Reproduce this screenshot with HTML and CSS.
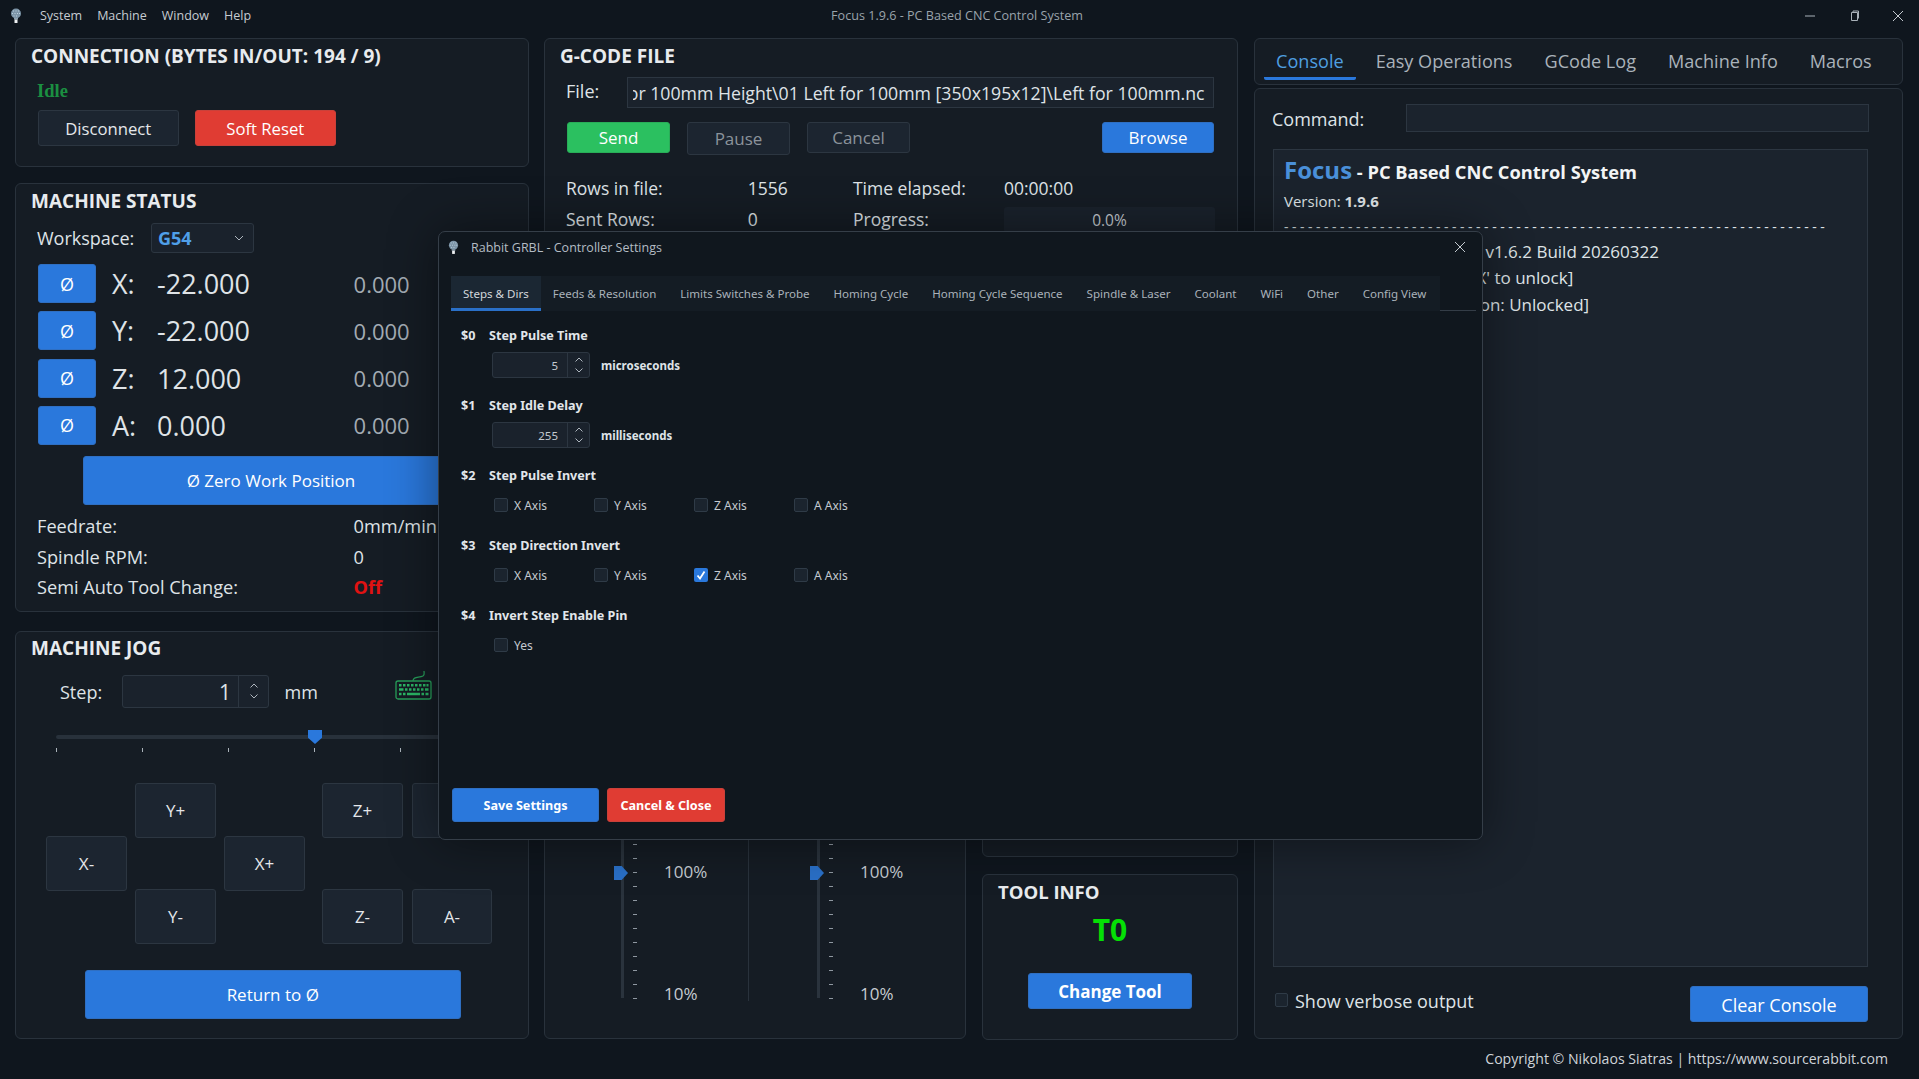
FILE: index.html
```html
<!DOCTYPE html>
<html lang="en">
<head>
<meta charset="utf-8">
<title>Focus 1.9.6 - PC Based CNC Control System</title>
<link rel="stylesheet" href="styles.css">
</head>
<body>
<svg class="defs" width="0" height="0" aria-hidden="true">
  <symbol id="bulb" viewBox="0 0 12 16">
    <circle cx="6" cy="5.500" r="5" fill="#7d95a8"/>
    <path d="M3 3h1M5.500 3h1M8 3h1M2 5.500h1M4.500 5.500h1M7 5.500h1M9 5.500h1M3.500 8h1M6 8h1" stroke="#bcd0de" stroke-width="1"/>
    <path d="M4 10h4v1.500H4z" fill="#8fa3b2"/>
    <path d="M4.500 11.500h3V15h-3z" fill="#eef1f3"/>
  </symbol>
  <symbol id="updown" viewBox="0 0 12 24">
    <path d="M2.500 8.500 6 5l3.500 3.500M2.500 15.500 6 19l3.500-3.500" fill="none" stroke="#aeb6be" stroke-width="1"/>
  </symbol>
  <symbol id="x" viewBox="0 0 12 12">
    <path d="M1 1l10 10M11 1 1 11" fill="none" stroke="#c4cad0" stroke-width="1"/>
  </symbol>
</svg>

<header class="titlebar">
  <nav class="menu">
    <svg class="bulb"><use href="#bulb"/></svg>
    <span>System</span><span>Machine</span><span>Window</span><span>Help</span>
  </nav>
  <div class="apptitle">Focus 1.9.6 - PC Based CNC Control System</div>
  <div class="winctl">
    <svg width="12" height="12" viewBox="0 0 12 12"><path d="M1 6h10" stroke="#aab2ba" fill="none"/></svg>
    <svg width="12" height="12" viewBox="0 0 12 12"><path d="M3.500 2.500h6v8h-6zM5 2.500V1h5.500v7.500" stroke="#aab2ba" fill="none"/></svg>
    <svg width="12" height="12"><use href="#x"/></svg>
  </div>
</header>

<main class="main">
  <section class="col-left">
    <div class="panel p-conn">
      <h2 class="ptitle">CONNECTION (BYTES IN/OUT: 194 / 9)</h2>
      <div class="idle">Idle</div>
      <div class="conn-btns">
        <button class="btn dark conn-btn">Disconnect</button>
        <button class="btn red conn-btn">Soft Reset</button>
      </div>
    </div>

    <div class="panel p-status">
      <h2 class="ptitle">MACHINE STATUS</h2>
      <div class="workspace">
        <span class="ws-label">Workspace:</span>
        <div class="combo"><span>G54</span>
          <svg width="10" height="6" viewBox="0 0 10 6"><path d="M1 1l4 4 4-4" fill="none" stroke="#aeb6be"/></svg>
        </div>
      </div>
      <div class="axes">
        <button class="btn blue zero">Ø</button><span class="axis">X:</span><span class="aval">-22.000</span><span class="mval">0.000</span>
        <button class="btn blue zero">Ø</button><span class="axis">Y:</span><span class="aval">-22.000</span><span class="mval">0.000</span>
        <button class="btn blue zero">Ø</button><span class="axis">Z:</span><span class="aval">12.000</span><span class="mval">0.000</span>
        <button class="btn blue zero">Ø</button><span class="axis">A:</span><span class="aval">0.000</span><span class="mval">0.000</span>
      </div>
      <button class="btn blue zero-all">Ø Zero Work Position</button>
      <div class="info">
        <span>Feedrate:</span><span>0mm/min</span>
        <span>Spindle RPM:</span><span>0</span>
        <span>Semi Auto Tool Change:</span><span class="off">Off</span>
      </div>
    </div>

    <div class="panel p-jog">
      <h2 class="ptitle jog-title">MACHINE JOG</h2>
      <div class="step-row">
        <span class="step-label">Step:</span>
        <div class="spin spin-lg"><span class="spin-val">1</span><span class="spin-btn"><svg width="12" height="24"><use href="#updown"/></svg></span></div>
        <span class="mm">mm</span>
        <svg class="kbd" width="37" height="30" viewBox="0 0 37 30">
          <rect x="1" y="11" width="35" height="18" rx="2" fill="none" stroke="#27a05a" stroke-width="1.300"/>
          <path d="M18 11c0-5 6-3 10-5 2-1 1-3 1-5" fill="none" stroke="#27a05a" stroke-width="1.200"/>
          <path d="M4 15.200h2.500M8 15.200h2.500M12 15.200h2.500M16 15.200h2.500M20 15.200h2.500M24 15.200h2.500M28 15.200h2.500M31.500 15.200h2M4 19.500h4.500M10 19.500h2.500M14 19.500h2.500M18 19.500h2.500M22 19.500h2.500M26 19.500h2.500M30 19.500h3.500M4 24h2.500M8 24h2.500M12 24h13M26.500 24h2.500M30.500 24h3" stroke="#2bb866" stroke-width="2.400" fill="none"/>
        </svg>
      </div>
      <div class="hslider">
        <div class="htrack"></div>
        <div class="hthumb"></div>
        <div class="hticks"><i></i><i></i><i></i><i></i><i></i><i></i></div>
      </div>
      <div class="pad">
        <button class="btn dark jog c2 r1">Y+</button>
        <button class="btn dark jog c5 r1">Z+</button>
        <button class="btn dark jog c6 r1">A+</button>
        <button class="btn dark jog c1 r2">X-</button>
        <button class="btn dark jog c3 r2">X+</button>
        <button class="btn dark jog c2 r3">Y-</button>
        <button class="btn dark jog c5 r3">Z-</button>
        <button class="btn dark jog c6 r3">A-</button>
      </div>
      <button class="btn blue return">Return to Ø</button>
    </div>
  </section>

  <section class="col-mid">
    <div class="panel p-gcode">
      <h2 class="ptitle">G-CODE FILE</h2>
      <div class="file-row">
        <span class="file-label">File:</span>
        <div class="file-input"><div class="file-clip"><span>Door Left for 100mm Height\01 Left for 100mm [350x195x12]\Left for 100mm.nc</span></div></div>
      </div>
      <div class="file-btns">
        <button class="btn green fb">Send</button>
        <button class="btn dark fb dim tall">Pause</button>
        <button class="btn dark fb dim">Cancel</button>
        <button class="btn blue fb browse">Browse</button>
      </div>
      <div class="stats">
        <span>Rows in file:</span><span>1556</span><span>Time elapsed:</span><span>00:00:00</span>
        <span>Sent Rows:</span><span>0</span><span>Progress:</span><div class="progress">0.0%</div>
      </div>
    </div>
    <div class="lower">
      <div class="panel p-over">
        <div class="ov-col ov-sep">
          <div class="vtrack"><div class="vthumb"></div></div>
          <div class="vticks"><i></i><i></i><i></i><i></i><i></i><i></i><i></i><i></i><i></i><i></i><i></i><i></i></div>
          <div class="vlabels"><span>100%</span><span>10%</span></div>
        </div>
        <div class="ov-col ov-col2">
          <div class="vtrack"><div class="vthumb"></div></div>
          <div class="vticks"><i></i><i></i><i></i><i></i><i></i><i></i><i></i><i></i><i></i><i></i><i></i><i></i></div>
          <div class="vlabels"><span>100%</span><span>10%</span></div>
        </div>
      </div>
      <div class="tool-col">
        <div class="panel p-hidden"></div>
        <div class="panel p-tool">
          <h2 class="ptitle tool-title">TOOL INFO</h2>
          <div class="t0">T0</div>
          <button class="btn blue change">Change Tool</button>
        </div>
      </div>
    </div>
  </section>

  <section class="col-right">
    <div class="panel p-tabs">
      <span class="tab on">Console</span><span class="tab">Easy Operations</span><span class="tab">GCode Log</span><span class="tab">Machine Info</span><span class="tab">Macros</span>
    </div>
    <div class="panel p-console">
      <div class="cmd-row"><span class="cmd-label">Command:</span><div class="cmd-input"></div></div>
      <div class="console">
        <div class="c-head"><b class="focus">Focus</b><b class="c-sub"> - PC Based CNC Control System</b></div>
        <div class="c-ver">Version: <b>1.9.6</b></div>
        <div class="c-dash">--------------------------------------------------------------------</div>
        <div class="c-line">Connected to Rabbit grbl v1.6.2 Build 20260322</div>
        <div class="c-line">[MSG:Locked use '$H'|'$X' to unlock]</div>
        <div class="c-line">[MSG:Machine Run Caution: Unlocked]</div>
      </div>
      <div class="c-foot">
        <label class="verbose"><span class="cb"></span>Show verbose output</label>
        <button class="btn blue clear">Clear Console</button>
      </div>
    </div>
  </section>
</main>

<footer class="foot">Copyright © Nikolaos Siatras | https://www.sourcerabbit.com</footer>

<div class="dialog">
  <div class="d-head">
    <svg class="d-bulb"><use href="#bulb"/></svg>
    <span class="d-title">Rabbit GRBL - Controller Settings</span>
    <svg class="d-x" width="12" height="12"><use href="#x"/></svg>
  </div>
  <div class="d-tabs">
    <div class="d-tablist">
      <span class="d-tab on">Steps &amp; Dirs</span><span class="d-tab">Feeds &amp; Resolution</span><span class="d-tab">Limits Switches &amp; Probe</span><span class="d-tab">Homing Cycle</span><span class="d-tab">Homing Cycle Sequence</span><span class="d-tab">Spindle &amp; Laser</span><span class="d-tab">Coolant</span><span class="d-tab">WiFi</span><span class="d-tab">Other</span><span class="d-tab">Config View</span>
    </div>
  </div>
  <div class="d-body">
    <div class="setting">
      <div class="s-head"><b class="s-id">$0</b><b>Step Pulse Time</b></div>
      <div class="s-ctl"><div class="spin spin-sm"><span class="spin-val">5</span><span class="spin-btn"><svg width="12" height="24"><use href="#updown"/></svg></span></div><b class="unit">microseconds</b></div>
    </div>
    <div class="setting">
      <div class="s-head"><b class="s-id">$1</b><b>Step Idle Delay</b></div>
      <div class="s-ctl"><div class="spin spin-sm"><span class="spin-val">255</span><span class="spin-btn"><svg width="12" height="24"><use href="#updown"/></svg></span></div><b class="unit">milliseconds</b></div>
    </div>
    <div class="setting">
      <div class="s-head"><b class="s-id">$2</b><b>Step Pulse Invert</b></div>
      <div class="s-checks">
        <label class="chk"><span class="cb"></span>X Axis</label><label class="chk"><span class="cb"></span>Y Axis</label><label class="chk"><span class="cb"></span>Z Axis</label><label class="chk"><span class="cb"></span>A Axis</label>
      </div>
    </div>
    <div class="setting">
      <div class="s-head"><b class="s-id">$3</b><b>Step Direction Invert</b></div>
      <div class="s-checks">
        <label class="chk"><span class="cb"></span>X Axis</label><label class="chk"><span class="cb"></span>Y Axis</label>
        <label class="chk"><span class="cb checked"><svg width="14" height="14" viewBox="0 0 14 14"><path d="M3.500 7.500 6 10.500l4.500-7" fill="none" stroke="#fff" stroke-width="1.800"/></svg></span>Z Axis</label>
        <label class="chk"><span class="cb"></span>A Axis</label>
      </div>
    </div>
    <div class="setting">
      <div class="s-head"><b class="s-id">$4</b><b>Invert Step Enable Pin</b></div>
      <div class="s-checks"><label class="chk"><span class="cb"></span>Yes</label></div>
    </div>
  </div>
  <div class="d-foot">
    <button class="btn blue d-save">Save Settings</button>
    <button class="btn red d-cancel">Cancel &amp; Close</button>
  </div>
</div>
</body>
</html>
```

FILE: styles.css
```css
* { box-sizing: border-box; }
html, body { margin: 0; padding: 0; }
body {
  width: 1919px; height: 1079px; overflow: hidden; position: relative;
  background: #0f161e; color: #dfe3e7;
  font-family: "Open Sans", "Noto Sans", sans-serif; font-size: 17px;
}
.defs { position: absolute; }
b { font-weight: 700; }

.titlebar {
  height: 38px; padding: 0 0 7px 0; display: grid;
  grid-template-columns: 1fr auto 1fr; align-items: center;
  font-size: 12.500px; color: #c6ccd2;
}
.menu { display: flex; align-items: center; padding-left: 10px; }
.bulb { width: 12px; height: 16px; margin-right: 18px; }
.menu span { margin-right: 15px; }
.apptitle { color: #9aa3ab; margin-right: 5px; font-size: 12.600px; }
.winctl { display: flex; justify-content: flex-end; gap: 32px; padding-right: 15px; }

.main {
  height: 1001px; padding-left: 15px; display: grid;
  grid-template-columns: 514px 694px 650px; column-gap: 15px;
}
.panel { background: #151c24; border: 1px solid #29323c; border-radius: 6px; }
.ptitle { margin: 8px 0 0 15px; font-size: 19px; line-height: 19px; font-weight: 700; color: #e8ebee; white-space: nowrap; }

.btn {
  font-family: inherit; color: #fff; border: 1px solid transparent; border-radius: 3px;
  font-size: 17px; padding: 0; display: block;
}
.btn.dark { background: #1c2530; border-color: #2c3641; color: #e4e7ea; }
.btn.blue { background: #2a78dc; border-color: #2f6fc2; }
.btn.red { background: #e03c33; border-color: #c9413a; }
.btn.green { background: #2bc060; border-color: #29ad58; }
.btn.dim { color: #8b939b; }

.col-left { display: flex; flex-direction: column; }
.p-conn { height: 128.500px; }
.p-status { height: 429px; margin-top: 16.500px; }
.p-jog { height: 408px; margin-top: 19px; }
.idle { margin: 15px 0 0 21px; font: 700 18.500px/20px "Liberation Serif", serif; color: #1b8f41; }
.conn-btns { display: flex; gap: 16.500px; margin: 9px 0 0 22px; }
.conn-btn { width: 140.500px; height: 36px; font-size: 16.700px; }

.p-status .ptitle { margin-top: 8px; }
.workspace { display: flex; align-items: center; margin: 11.500px 0 0 21px; font-size: 18px; }
.ws-label { width: 114px; }
.combo {
  width: 102.500px; height: 30px; border: 1px solid #2c3641; border-radius: 3px; background: #1a222c;
  display: flex; align-items: center; justify-content: space-between; padding: 0 9px 0 6px;
  color: #4f9fe8; font-weight: 700;
}
.axes {
  display: grid; grid-template-columns: 58px 61px 196.600px auto; grid-auto-rows: 39px; row-gap: 8.300px;
  margin: 11.500px 0 0 22px; align-items: center;
}
.zero { width: 58px; height: 39px; font-size: 18px; }
.axis { font-size: 27px; padding-left: 16px; white-space: nowrap; }
.aval { font-size: 27px; }
.mval { font-size: 22px; color: #a3abb3; }
.zero-all { width: 377px; height: 49px; margin: 11.300px 0 0 66.500px; font-size: 17px; }
.info {
  display: grid; grid-template-columns: 316.600px auto; grid-auto-rows: 30.300px; align-items: center;
  margin: 6px 0 0 21px; font-size: 18.200px; white-space: nowrap;
}
.off { color: #e01212; font-weight: 700; }

.p-jog .jog-title { margin-top: 7px; }
.step-row { display: flex; align-items: center; margin: 17px 0 0 44px; height: 32.500px; font-size: 18px; }
.step-label { width: 61.500px; padding-top: 1px; }
.spin {
  display: flex; border: 1px solid #2c3641; border-radius: 3px; background: #1a222c;
  align-items: center;
}
.spin-val { flex: 1; text-align: right; }
.spin-btn { border-left: 1px solid #2c3641; align-self: stretch; display: flex; align-items: center; justify-content: center; }
.spin-lg { width: 147.500px; height: 32.500px; font-size: 21px; }
.spin-lg .spin-val { padding: 1px 7px 0 0; }
.spin-lg .spin-btn { width: 30px; }
.mm { width: 125.500px; padding-left: 15.500px; padding-top: 1px; }
.kbd { margin-top: -12px; }

.hslider { position: relative; width: 431px; height: 23px; margin: 22.500px 0 0 40px; }
.htrack { height: 4px; margin-top: 5px; position: absolute; top: 0; left: 0; right: 0; background: #28313b; border-radius: 2px; }
.hthumb {
  position: absolute; left: 252px; top: 0; width: 14px; height: 14px; background: #2a78dc;
  clip-path: polygon(0 0, 100% 0, 100% 55%, 50% 100%, 0 55%);
}
.hticks { position: absolute; left: 0; right: 0; top: 18px; display: flex; justify-content: space-between; }
.hticks i { width: 1px; height: 4px; background: #aab2ba; }

.pad {
  display: grid; grid-template-columns: 81px 81px 81px 1px 81px 81px; column-gap: 8px;
  grid-auto-rows: 53px; margin: 30px 0 0 30px;
}
.jog { height: 54.500px; font-size: 17px; }
.c1 { grid-column: 1; } .c2 { grid-column: 2; } .c3 { grid-column: 3; }
.c5 { grid-column: 5; } .c6 { grid-column: 6; margin-left: 1px; }
.r1 { grid-row: 1; } .r2 { grid-row: 2; } .r3 { grid-row: 3; }
.return { width: 376.500px; height: 49px; margin: 28px 0 0 68.500px; }

.col-mid { display: flex; flex-direction: column; }
.p-gcode { height: 212px; }
.file-row { display: flex; align-items: center; margin: 11px 0 0 21px; height: 30.500px; font-size: 17.700px; }
.file-label { width: 61px; margin-top: -3px; font-size: 18px; }
.file-input { width: 586.500px; height: 30.500px; border: 1px solid #2c3641; background: #1a222c; padding: 2px 8px 0 5px; display: flex; align-items: center; }
.file-clip { width: 100%; overflow: hidden; display: flex; justify-content: flex-end; white-space: nowrap; }
.file-btns { display: flex; align-items: flex-start; margin: 14.500px 0 0 22px; width: 647px; }
.fb { width: 103px; height: 31px; margin-right: 17px; }
.fb.tall { height: 32.500px; }
.browse { width: 112px; margin: 0 0 0 auto; }
.stats {
  display: grid; grid-template-columns: 181.800px 105.200px 151px 211px; grid-auto-rows: 31px;
  align-items: center; margin: 17.700px 0 0 21px; font-size: 17.500px;
}
.progress { height: 26px; margin-top: 3px; background: #1a222c; text-align: center; font-size: 15.500px; line-height: 26px; border-radius: 3px; color: #c6ccd2; }

.lower { display: grid; grid-template-columns: 422px 256px; column-gap: 16px; margin-top: 16px; height: 773px; }
.p-over { height: 773px; display: grid; grid-template-columns: 204px 1fr; align-items: end; padding-bottom: 37px; }
.ov-col { display: flex; height: 168px; padding-left: 76px; }
.ov-sep { border-right: 1px solid #29323c; }
.ov-col2 { padding-left: 68px; }
.vtrack { position: relative; width: 3px; height: 165px; background: #2a333d; }
.vthumb {
  position: absolute; left: -7px; top: 33px; width: 14px; height: 14px; background: #2a70c8;
  clip-path: polygon(0 0, 55% 0, 100% 50%, 55% 100%, 0 100%);
}
.vticks { display: flex; flex-direction: column; justify-content: flex-end; gap: 13px; margin-left: 9px; height: 166px; }
.vticks i { display: block; width: 4px; height: 1px; background: #8f98a1; }
.vlabels { display: flex; flex-direction: column; gap: 98px; margin: 27px 0 0 27px; font-size: 17px; line-height: 24px; color: #c6ccd2; }

.tool-col { display: flex; flex-direction: column; }
.p-hidden { height: 591px; }
.p-tool { height: 166px; margin-top: 17px; }
.tool-title { font-size: 18.500px; margin-top: 7px; }
.t0 { margin-top: 11.500px; text-align: center; font: 700 30px/34px "Noto Sans", sans-serif; color: #05e005; }
.change { width: 164px; height: 36px; margin: 26.500px 0 0 45px; font-weight: 700; }

.col-right { display: flex; flex-direction: column; margin-left: 1px; }
.p-tabs { height: 46.500px; display: flex; gap: 8px; padding-left: 9px; align-items: flex-start; font-size: 18.100px; color: #aab2ba; }
.tab { padding: 9px 12px 0; height: 41px; line-height: 27px; white-space: nowrap; }
.tab.on { color: #4f9fe0; border-bottom: 3px solid #2a78dc; border-radius: 0 0 2px 2px; }
.p-console { height: 951px; margin-top: 3.500px; }
.cmd-row { display: flex; align-items: center; margin: 15px 0 0 17px; height: 27.500px; font-size: 18px; }
.cmd-label { width: 134px; margin-top: 2px; }
.cmd-input { width: 463px; height: 27.500px; background: #1b232d; border: 1px solid #2c3641; }
.console { width: 595px; height: 818px; margin: 17.500px 0 0 18px; background: #1b232d; border: 1px solid #2c3641; padding: 0 10px; }
.c-head { margin-top: 2.500px; line-height: 34px; font-size: 18.300px; color: #f2f4f5; white-space: nowrap; }
.focus { font-size: 24px; color: #4a90d9; }
.c-ver { font-size: 15px; line-height: 24px; }
.c-dash { font-size: 14px; letter-spacing: 3.500px; line-height: 20px; margin: 4px 0 2px; white-space: nowrap; overflow: hidden; width: 545px; }
.c-line { font-size: 17px; line-height: 26.500px; white-space: nowrap; }
.c-foot { display: flex; justify-content: space-between; margin: 19px 0 0 20px; width: 593px; }
.verbose { display: flex; align-items: center; font-size: 18px; height: 24px; margin-top: 2.500px; }
.verbose .cb { width: 13px; height: 14px; margin-right: 7px; margin-top: -2px; }
.clear { width: 178px; height: 36px; font-size: 18px; padding-top: 1px; }
.cb { display: block; width: 14px; height: 14px; flex: none; background: #1b242e; border: 1px solid #2f3b47; border-radius: 2px; }
.cb.checked { background: #2a78dc; border: 0; }
.cb svg { display: block; }

.foot { height: 40px; padding: 10px 31px 0 0; text-align: right; font-size: 14.100px; line-height: 20px; color: #cfd4d9; }

.dialog {
  position: absolute; left: 438px; top: 231px; width: 1045px; height: 609px;
  background: #10171e; border: 1px solid #353e48; border-radius: 7px;
  box-shadow: 0 0 50px rgba(0, 0, 0, .45);
  display: flex; flex-direction: column;
  font-family: "Noto Sans", sans-serif; font-size: 11.540px; color: #c4cad0;
}
.d-head { height: 44px; display: flex; align-items: flex-start; padding: 8px 16px 0 9px; }
.d-bulb { width: 11px; height: 15px; }
.d-title { margin-left: 12px; font-family: "Open Sans", sans-serif; font-size: 12.500px; line-height: 16px; color: #b4bcc4; }
.d-x { margin-left: auto; margin-top: 1px; }
.d-tabs { margin: 0 6px 0 12px; height: 35px; border-bottom: 1px solid #343d47; }
.d-tablist { display: inline-flex; height: 35px; background: #141c24; width: 989px; }
.d-tab { padding: 0 12px; line-height: 35px; height: 35px; white-space: nowrap; color: #aab2ba; }
.d-tab.on { background: #1b2733; border-bottom: 3px solid #2a70c8; color: #d3d8dc; }
.d-body { padding: 15px 0 0 22px; }
.setting { height: 70px; }
.s-head { height: 20px; line-height: 20px; display: flex; color: #e2e6ea; font-size: 12.600px; }
.s-id { width: 28px; }
.s-ctl { display: flex; align-items: center; margin: 6px 0 0 31px; }
.spin-sm { width: 98px; height: 26px; font-size: 11.500px; color: #c4cad0; }
.spin-sm .spin-val { padding-right: 9px; }
.spin-sm .spin-btn { width: 22px; }
.unit { margin-left: 11px; color: #dfe3e7; font-size: 11.500px; }
.s-checks { display: flex; margin: 12px 0 0 33px; }
.chk { width: 100px; display: flex; align-items: center; height: 14px; font-size: 12px; }
.chk .cb { margin-right: 6px; }
.d-foot { margin-top: auto; display: flex; gap: 8px; padding: 0 0 17px 13px; }
.d-foot .btn { height: 34px; font-family: "Noto Sans", sans-serif; font-size: 12.600px; font-weight: 700; }
.d-save { width: 147px; }
.d-cancel { width: 118px; }
```
